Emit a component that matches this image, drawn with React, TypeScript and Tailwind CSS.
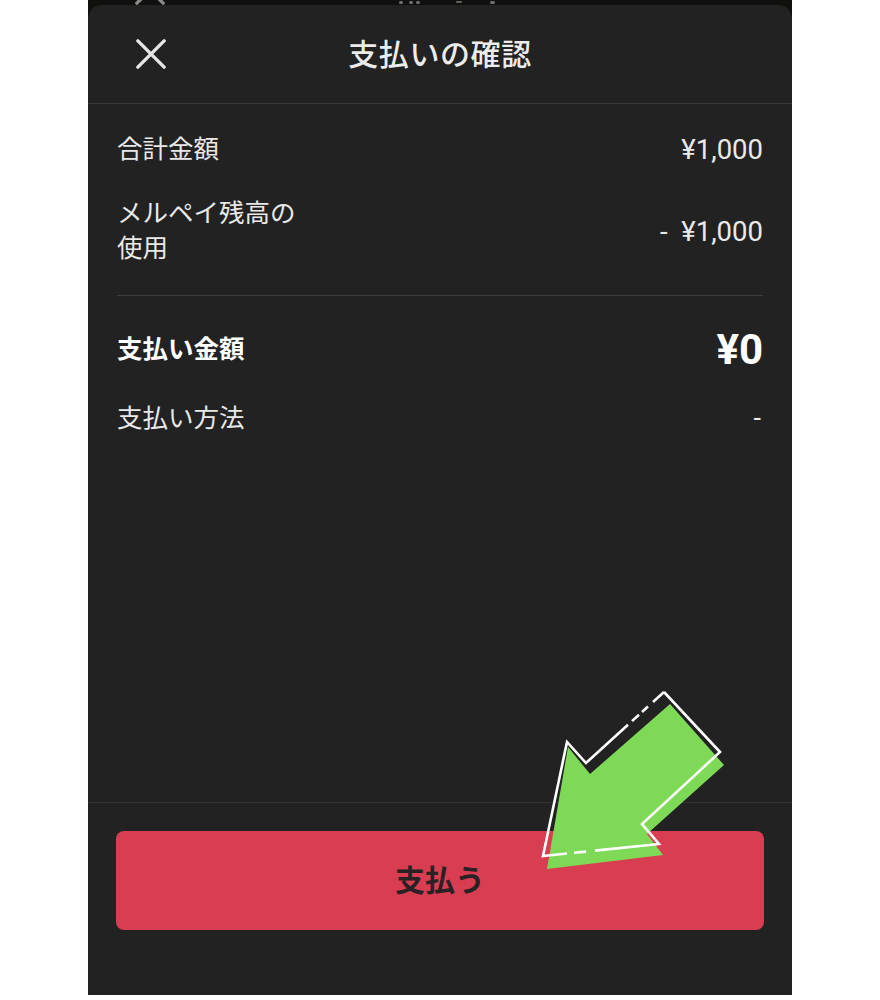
import React from "react"

const font = { fontFamily: 'Roboto, "Noto Sans CJK JP", sans-serif' }

function CloseIcon({ className }: { className?: string }) {
  return (
    <svg viewBox="0 0 32 32" className={className} fill="none" stroke="currentColor" strokeWidth={3.6} strokeLinecap="round">
      <path d="M2 2 L30 30 M30 2 L2 30" />
    </svg>
  )
}

// 注釈の矢印（緑＋白いアウトライン）
function Arrow() {
  return (
    <svg
      className="pointer-events-none absolute left-0 top-0"
      width={880}
      height={1000}
      viewBox="0 0 880 1000"
      aria-hidden="true"
    >
      <polygon
        points="670,704 724,765 647,834 663,855 547,869 568,747 590,774"
        fill="#7ed957"
      />
      <g stroke="#ffffff" strokeWidth={2.6} fill="none" strokeLinejoin="miter" strokeLinecap="butt">
        <polyline points="664,692 720,752 642,824 659,844 595,850.6" />
        <line x1="586" y1="851.6" x2="574" y2="852.8" />
        <polyline points="567,853.5 543,856 567,742 586,763 628,724.8" />
        <line x1="632" y1="721.1" x2="639" y2="714.7" />
        <line x1="642" y1="712" x2="648" y2="706.5" />
        <line x1="653" y1="702" x2="664" y2="692" />
      </g>
    </svg>
  )
}

export default function App() {
  return (
    <div className="relative h-[1000px] w-[880px] bg-white" style={font}>
      <div className="relative ml-[88px] h-[995px] w-[704px] overflow-hidden bg-[#10100e] pt-[5px]">
        {/* 後ろの画面（上端だけ見える） */}
        <div className="absolute left-[47px] top-[-25px] text-[#8a8a88]">
          <CloseIcon className="h-[30px] w-[30px]" />
        </div>
        <div className="absolute left-[311px] top-[1px] flex gap-[6px]">
          <span className="h-[3px] w-[4px] rounded-full bg-[#6f6f6d]" />
          <span className="h-[3px] w-[4px] rounded-full bg-[#6f6f6d]" />
          <span className="ml-[-3px] h-[3px] w-[4px] rounded-full bg-[#6f6f6d]" />
          <span className="ml-[30px] h-[2px] w-[6px] rounded-full bg-[#5f5f5d]" />
          <span className="ml-[22px] h-[3px] w-[5px] rounded-full bg-[#6f6f6d]" />
        </div>

        <div className="relative flex h-[990px] flex-col rounded-t-[14px] bg-[#222222] text-[#e9e9e9]">
          {/* Header */}
          <div className="relative flex h-[99px] items-center justify-center border-b border-[#3b3b3b]">
            <button className="absolute left-[48px] top-[34px] text-[#e6e6e6]">
              <CloseIcon className="h-[30px] w-[30px]" />
            </button>
            <h1 className="text-[30px] font-medium tracking-[0.6px] text-[#ececec]">支払いの確認</h1>
          </div>

          {/* 明細 */}
          <div className="px-[29px] pt-[28px] text-[25.5px] leading-[35px]">
            <div className="flex items-center justify-between">
              <span>合計金額</span>
              <span className="text-[27.5px]">¥1,000</span>
            </div>
            <div className="mt-[29px] flex items-center justify-between">
              <span>
                メルペイ残高の
                <br />
                使用
              </span>
              <span className="text-[27.5px]">-&nbsp;&nbsp;¥1,000</span>
            </div>
            <div className="mt-[29px] h-px bg-[#3d3d3d]" />
            <div className="mt-[33px] flex h-[40px] items-center justify-between font-bold text-white">
              <span>支払い金額</span>
              <span className="text-[42px]">¥0</span>
            </div>
            <div className="mt-[32px] flex items-center justify-between">
              <span>支払い方法</span>
              <span className="pr-[2px] text-[27px]">-</span>
            </div>
          </div>

          <div className="flex-1" />

          {/* Footer */}
          <div className="border-t border-[#333333] px-[28px] pb-[65px] pt-[28px]">
            <button className="flex h-[99px] w-full items-center justify-center rounded-[8px] bg-[#d93d52] text-[30px] font-bold text-[#2a2125]">
              支払う
            </button>
          </div>
        </div>
      </div>
      <Arrow />
    </div>
  )
}
